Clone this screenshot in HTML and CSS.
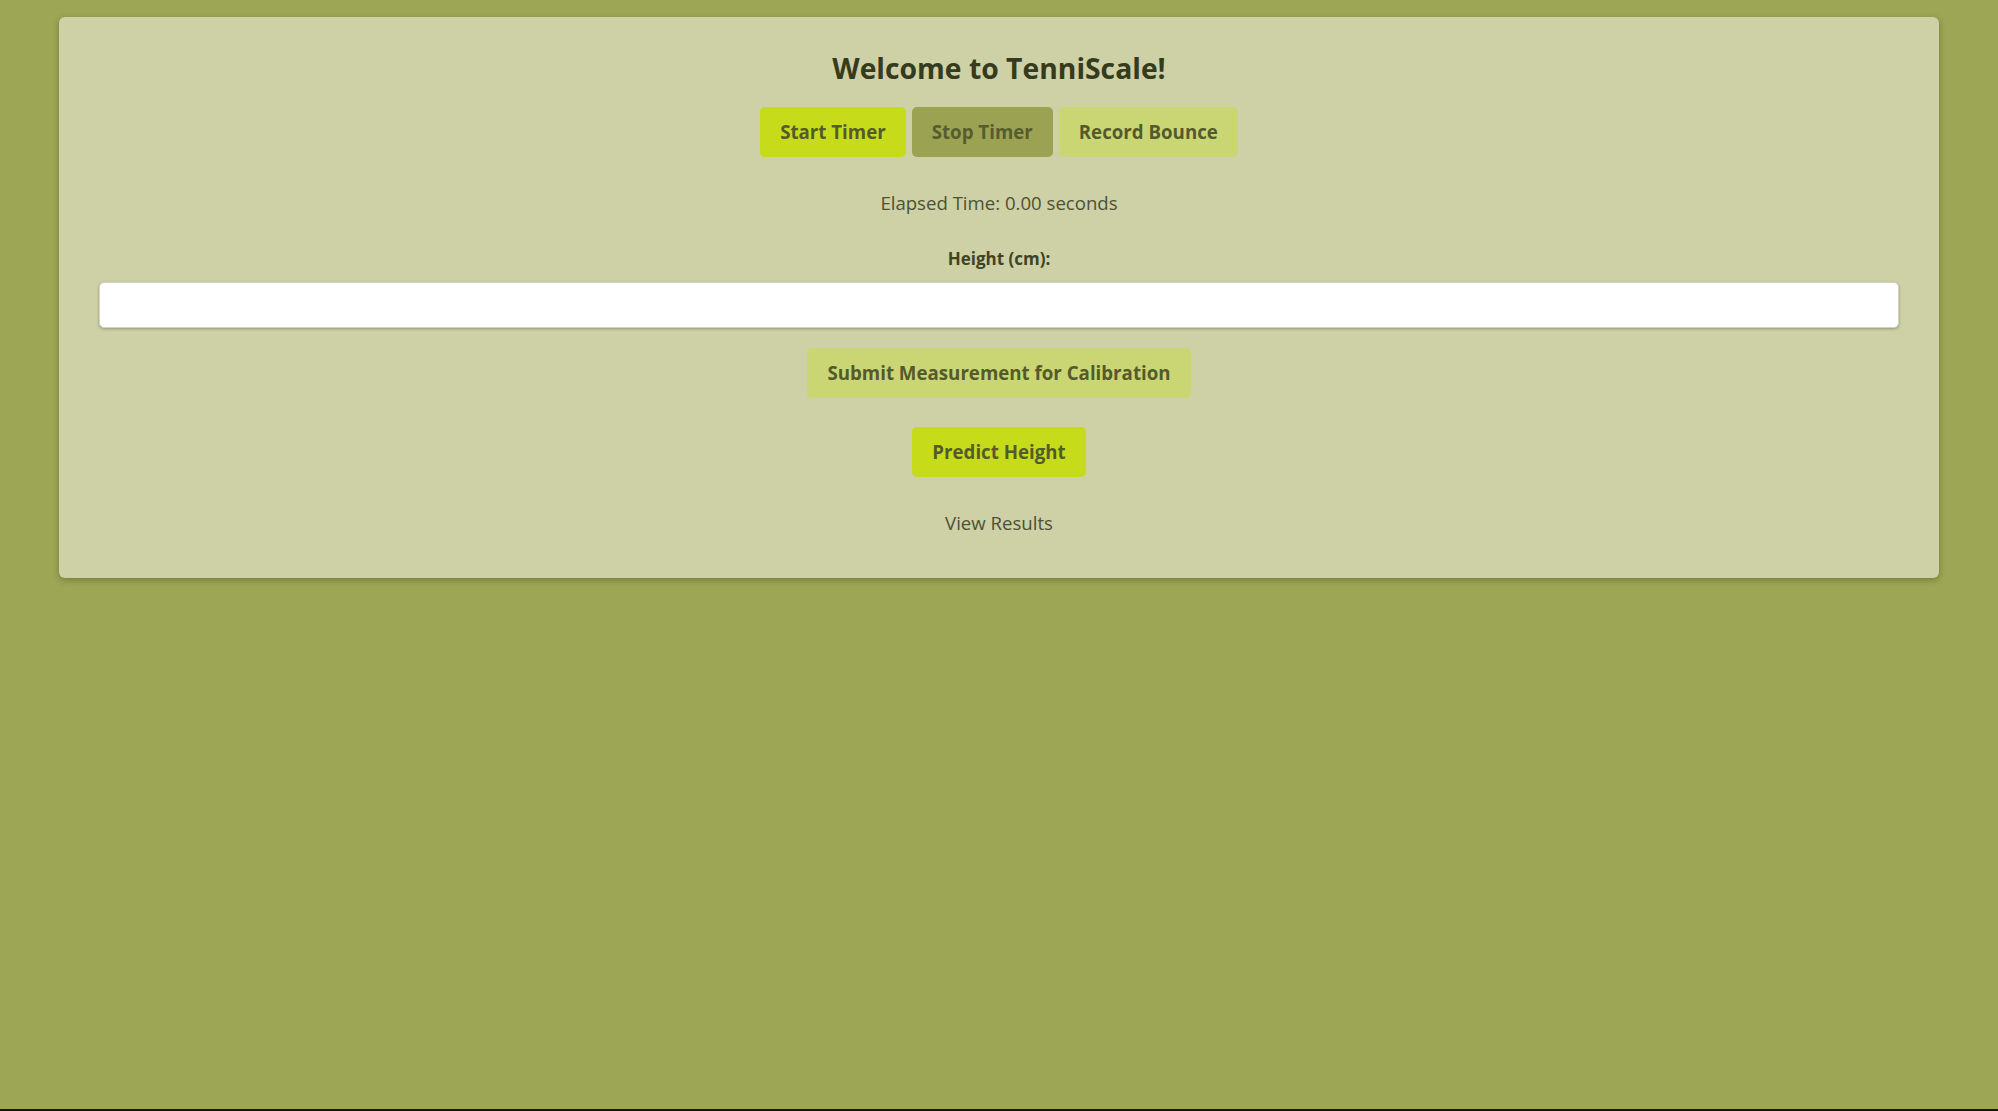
FILE: index.html
```html
<!DOCTYPE html>
<html lang="en">
<head>
<meta charset="utf-8">
<title>TenniScale</title>
<link rel="stylesheet" href="styles.css">
</head>
<body>
<main class="card">
  <h1 class="title">Welcome to TenniScale!</h1>
  <div class="button-row">
    <button class="btn btn-bright">Start Timer</button>
    <button class="btn btn-dark">Stop Timer</button>
    <button class="btn btn-pale">Record Bounce</button>
  </div>
  <p class="elapsed">Elapsed Time: 0.00 seconds</p>
  <label class="label" for="height">Height (cm):</label>
  <input class="input" id="height" type="text">
  <button class="btn btn-pale btn-submit">Submit Measurement for Calibration</button>
  <button class="btn btn-bright btn-predict">Predict Height</button>
  <p class="results">View Results</p>
</main>
</body>
</html>
```
FILE: styles.css
```css
html {
  background: #141414;
  margin: 0;
}

body {
  margin: 0;
  min-height: 1109px;
  background: #9ca655;
  font-family: "Open Sans", "Noto Sans", sans-serif;
  color: #4c5233;
  overflow: hidden;
}

.card {
  margin: 17px 59px 0;
  padding: 32px 40px 43px;
  background: #ced0a6;
  border-radius: 6px;
  box-shadow: 0 2px 6px rgba(40, 45, 10, 0.35);
  display: flex;
  flex-direction: column;
  align-items: center;
}

.title {
  margin: 0 0 19px;
  font-size: 28.3px;
  font-weight: 700;
  line-height: 38.5px;
  color: #353b1c;
}

.button-row {
  display: flex;
  gap: 6px;
}

.btn {
  height: 50px;
  padding: 0 20px;
  border: none;
  border-radius: 5px;
  font-family: "Open Sans", "Noto Sans", sans-serif;
  font-size: 18.7px;
  font-weight: 700;
  color: #545a2b;
  cursor: pointer;
}

.btn-bright {
  background: #c6dc1b;
}

.btn-dark {
  background: #9ba353;
  color: #565c2e;
}

.btn-pale {
  background: #cad674;
}

.elapsed {
  margin: 33px 0 0;
  font-size: 18.6px;
  line-height: 25.3px;
}

.label {
  margin-top: 32.5px;
  font-size: 17px;
  font-weight: 700;
  line-height: 23.2px;
  color: #3f4424;
}

.input {
  align-self: stretch;
  box-sizing: border-box;
  height: 46px;
  margin-top: 11px;
  padding: 0 12px;
  border: 1px solid #d2d2c8;
  border-radius: 5px;
  background: #ffffff;
  box-shadow: 0 1px 3px rgba(0, 0, 0, 0.28);
  font-family: "Open Sans", sans-serif;
  font-size: 18px;
}

.btn-submit {
  margin-top: 20px;
}

.btn-predict {
  margin-top: 29px;
}

.results {
  margin: 33px 0 0;
  font-size: 18.6px;
  line-height: 25.3px;
}
```
